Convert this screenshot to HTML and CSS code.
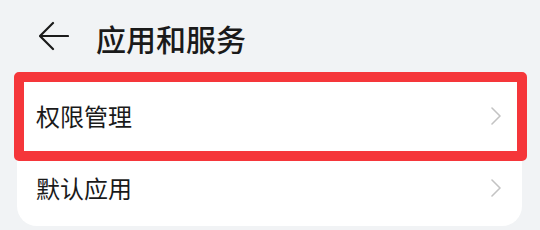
FILE: index.html
```html
<!DOCTYPE html>
<html lang="zh-CN">
<head>
    <meta charset="UTF-8">
    <meta name="viewport" content="width=device-width, initial-scale=1.0">
    <title>应用和服务</title>
    <link rel="stylesheet" href="styles.css">
</head>

<body>
    <div class="header">
        <svg class="back" width="30" height="30" viewBox="0 0 30 30">
            <path d="M14 2 L1 15 L14 28 M1 15 H29" fill="none" stroke="#1b1b1b" stroke-width="2.2" stroke-linecap="round" stroke-linejoin="round"/>
        </svg>
        <p class="title">应用和服务</p>
    </div>

    <ul class="card">
        <li class="row selected">
            <span>权限管理</span>
            <svg class="arrow" width="10" height="18" viewBox="0 0 10 18">
                <path d="M1 1 L9 9 L1 17" fill="none" stroke="#c3c3c3" stroke-width="1.6" stroke-linecap="round" stroke-linejoin="round"/>
            </svg>
        </li>
        <li class="row">
            <span>默认应用</span>
            <svg class="arrow" width="10" height="18" viewBox="0 0 10 18">
                <path d="M1 1 L9 9 L1 17" fill="none" stroke="#c3c3c3" stroke-width="1.6" stroke-linecap="round" stroke-linejoin="round"/>
            </svg>
        </li>
    </ul>
</body>

</html>
```

FILE: styles.css
```css
* {
    list-style: none;
    margin: 0;
    padding: 0;
    box-sizing: border-box;
    font-family: "Noto Sans CJK SC", "Noto Sans", sans-serif;
}

body {
    background-color: #f1f3f5;
    width: 540px;
    height: 230px;
    overflow: hidden;
}

.header {
    display: flex;
    align-items: center;
    height: 76px;
    padding-left: 39px;
}

.header .back {
    margin-top: -4px;
}

.header .title {
    margin-left: 27px;
    font-size: 30px;
    font-weight: 500;
    color: #1a1a1a;
    line-height: 1;
}

.card {
    margin: 0 18px 0 17px;
    background-color: #fff;
    border-radius: 20px;
    padding: 4px 0 2px;
}

.card .row {
    position: relative;
    display: flex;
    align-items: center;
    justify-content: space-between;
    height: 72px;
    padding: 0 21px 0 19px;
    font-size: 24px;
    color: #1a1a1a;
}

.card .row span {
    line-height: 1;
}

/* 标注框 */
.card .selected::after {
    content: '';
    position: absolute;
    left: -3px;
    right: -5px;
    top: -8px;
    bottom: -9px;
    border: 10px solid #f5363a;
    border-radius: 5px;
}
```
